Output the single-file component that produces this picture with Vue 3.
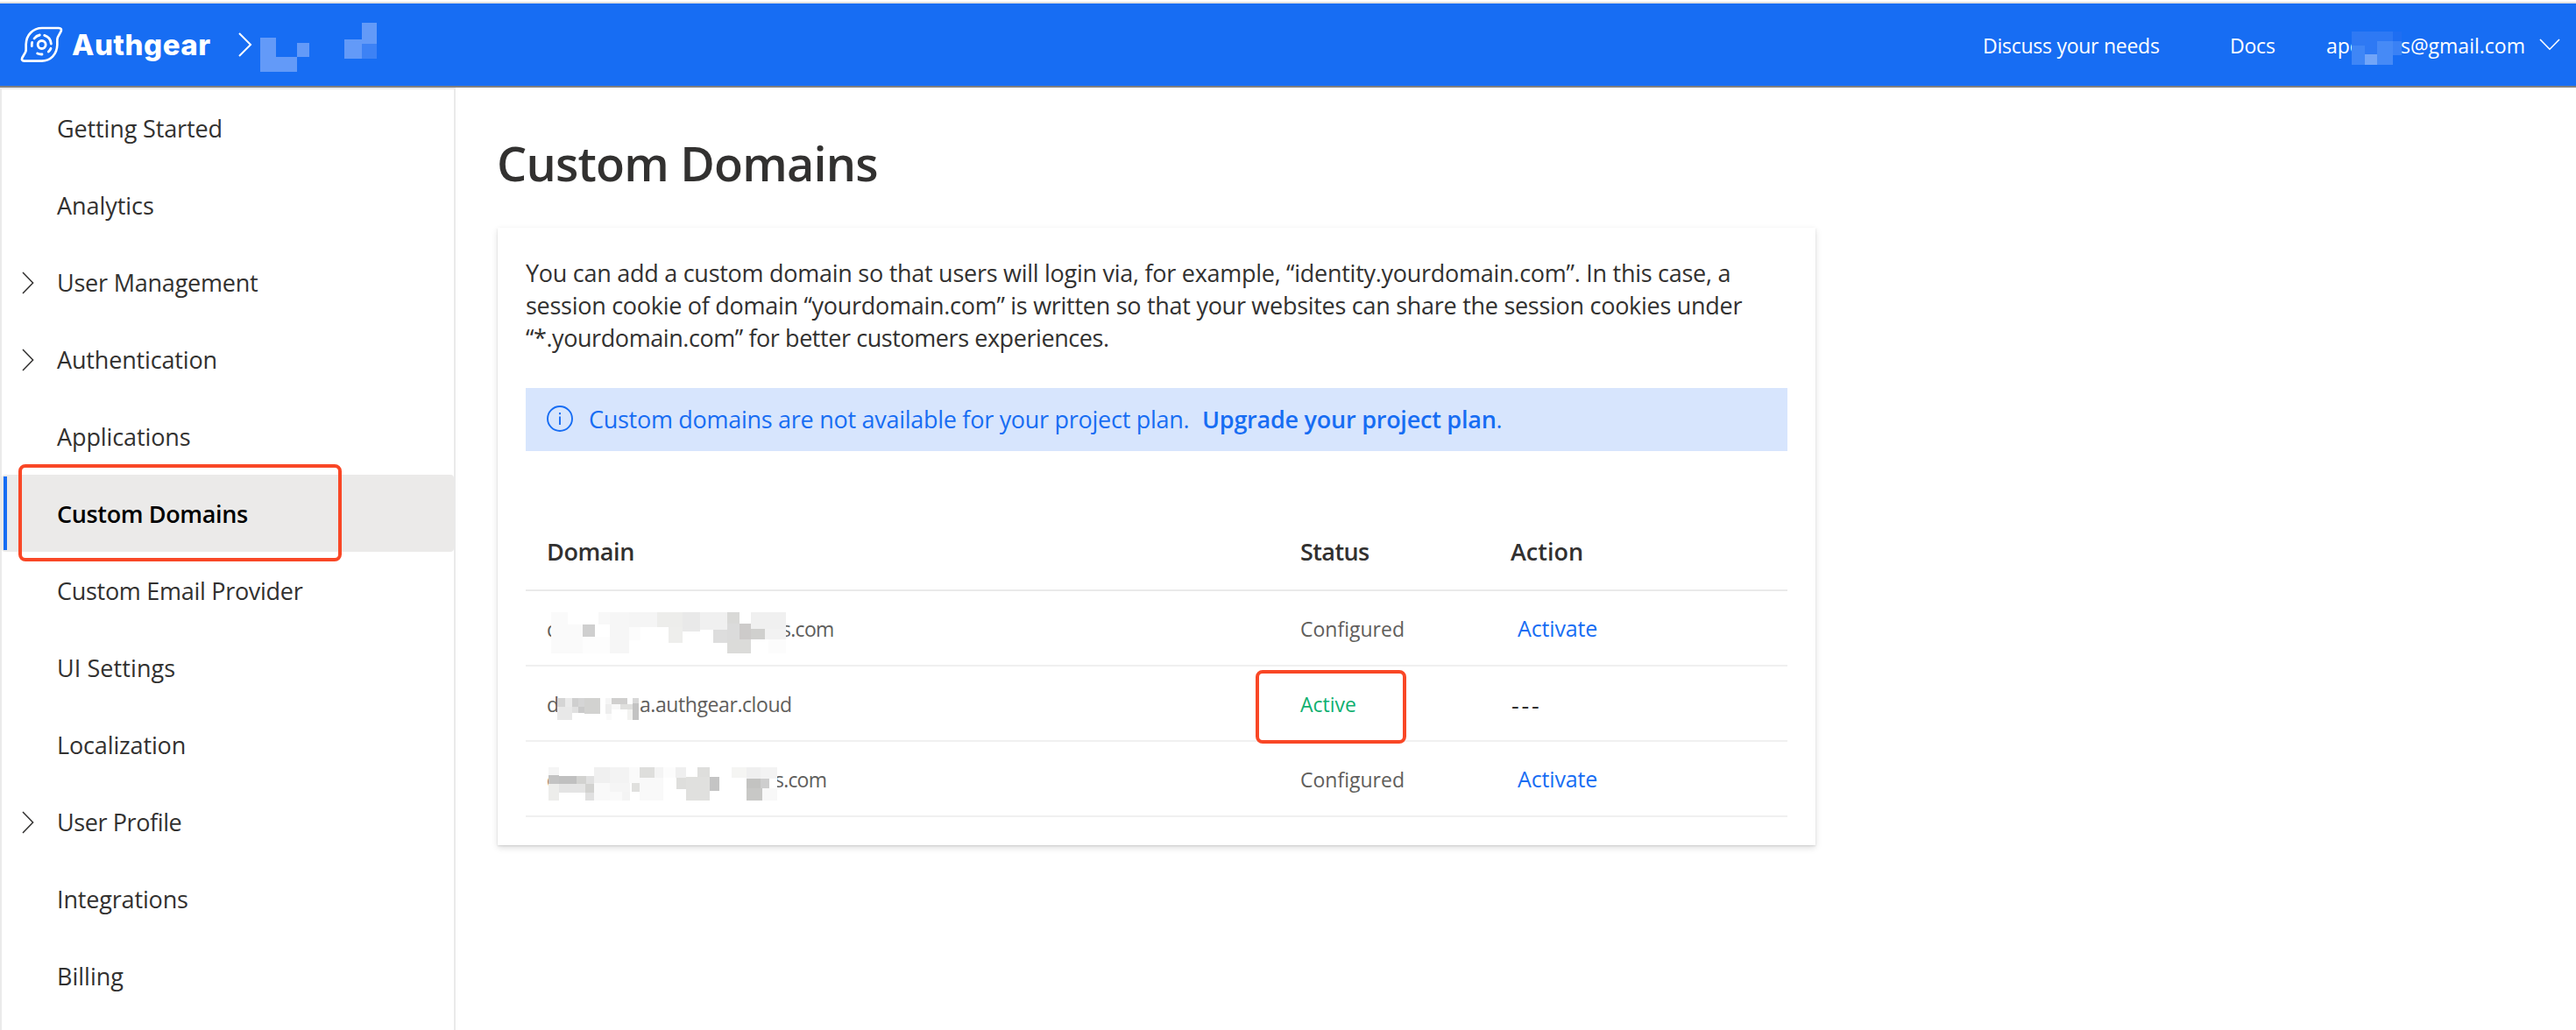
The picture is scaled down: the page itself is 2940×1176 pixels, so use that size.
<script setup>
const nav = [
  { label: 'Getting Started', ls: -0.13 },
  { label: 'Analytics', ls: -0.05 },
  { label: 'User Management', ls: -0.22, expandable: true },
  { label: 'Authentication', ls: -0.16, expandable: true },
  { label: 'Applications', ls: -0.1 },
  { label: 'Custom Domains', ls: -0.36, selected: true },
  { label: 'Custom Email Provider', ls: -0.29 },
  { label: 'UI Settings', ls: 0.08 },
  { label: 'Localization', ls: -0.14 },
  { label: 'User Profile', ls: -0.4, expandable: true },
  { label: 'Integrations', ls: -0.16 },
  { label: 'Billing', ls: 0 },
]

const description = [
  { text: 'You can add a custom domain so that users will login via, for example, “identity.yourdomain.com”. In this case, a', ls: -0.27 },
  { text: 'session cookie of domain “yourdomain.com” is written so that your websites can share the session cookies under', ls: -0.28 },
  { text: '“*.yourdomain.com” for better customers experiences.', ls: -0.43 },
]

// Mosaic tiles: [left, top, right, bottom, fill] in thirds of a pixel
const crumbTiles = [
  [891, 129, 945, 246, '#639af8'], [945, 195, 1017, 246, '#639af8'], [1017, 147, 1059, 195, '#639af8'],
  [1239, 78, 1290, 150, '#639af8'], [1179, 135, 1239, 201, '#639af8'], [1239, 150, 1290, 201, '#3d82f5'],
]
const emailTiles = [
  [132, 48, 303, 162, '#176df3'],
  [132, 48, 177, 96, '#2f79f3'], [177, 48, 273, 81, '#2e79f4'], [177, 81, 219, 126, '#2e79f4'],
  [132, 96, 177, 162, '#3f86f6'], [177, 126, 219, 162, '#72a5f8'], [219, 81, 273, 162, '#468af6'],
  [273, 48, 303, 81, '#1e6ef2'], [273, 81, 303, 129, '#3a81f5'],
]

const rows = [
  {
    prefix: 'd', prefixWidth: 268, suffix: 's.com', ls: -0.7, status: 'Configured', action: 'Activate',
    box: [87, 117, 891, 258], top: 24,
    tiles: [
      [87, 117, 891, 258, '#fff'],
      [87, 117, 144, 159, '#fafafa'], [87, 159, 195, 258, '#fafafa'], [195, 159, 237, 201, '#cfcfcf'],
      [195, 201, 288, 258, '#fdfdfd'], [249, 117, 288, 159, '#f8f8f8'], [288, 117, 354, 258, '#f6f6f6'],
      [354, 117, 450, 168, '#f5f5f5'], [354, 168, 393, 213, '#fcfcfc'], [450, 117, 537, 168, '#ededeb'],
      [489, 168, 537, 222, '#eeeeec'], [537, 117, 597, 183, '#e9e9e9'], [597, 117, 690, 177, '#f0f0f0'],
      [690, 117, 732, 156, '#d9d9d7'], [642, 177, 690, 222, '#dddddd'], [690, 156, 732, 210, '#dbdbdb'],
      [732, 156, 771, 210, '#cdcbca'], [771, 174, 819, 210, '#d0d0ce'], [690, 210, 771, 258, '#dbdbd9'],
      [771, 117, 891, 174, '#f0f0f0'], [819, 174, 891, 210, '#f2f2f2'], [831, 210, 891, 258, '#fcfcfc'],
    ],
  },
  {
    prefix: 'd', prefixWidth: 106, suffix: 'a.authgear.cloud', ls: -0.42, status: 'Active', action: '---',
    box: [108, 411, 387, 486], top: 36,
    tiles: [
      [108, 411, 135, 441, '#d5d5d5'], [135, 411, 159, 441, '#eaeaea'], [108, 441, 159, 486, '#e8e8e8'],
      [159, 411, 180, 441, '#cfcfcf'], [180, 411, 201, 441, '#d5d5d5'], [159, 441, 180, 462, '#e0e0e0'],
      [180, 441, 201, 462, '#cacaca'], [201, 411, 255, 465, '#d2d2d0'], [273, 411, 294, 432, '#f5f5f5'],
      [273, 432, 294, 465, '#eeeeee'], [276, 465, 294, 486, '#fafafa'], [294, 411, 348, 432, '#d0cfce'],
      [294, 432, 324, 450, '#f8f8f8'], [324, 432, 366, 450, '#e0e0de'], [366, 411, 387, 429, '#d8d8d8'],
      [366, 429, 387, 486, '#c3c3c3'], [348, 450, 366, 486, '#f2f2f0'],
    ],
  },
  {
    prefix: 'd', prefixWidth: 260, suffix: 's.com', ls: -0.8, status: 'Configured', action: 'Activate',
    box: [78, 648, 861, 762], top: 29,
    tiles: [
      [78, 648, 861, 762, '#fff'],
      [78, 648, 114, 675, '#f5f5f5'], [78, 675, 114, 705, '#c3c3c3'], [114, 678, 174, 705, '#c0c0c0'],
      [174, 678, 207, 705, '#d2d2d0'], [207, 678, 234, 705, '#e0e0e0'], [78, 705, 114, 762, '#ededeb'],
      [114, 705, 204, 735, '#e4e4e4'], [204, 705, 234, 735, '#d2d2d0'], [204, 735, 234, 762, '#e0e0e0'],
      [234, 648, 288, 702, '#f0f0f0'], [288, 648, 354, 702, '#f3f3f3'], [234, 702, 288, 762, '#f9f9f9'],
      [288, 702, 357, 732, '#f5f5f5'], [288, 732, 330, 762, '#fafafa'], [330, 732, 357, 762, '#f4f4f4'],
      [354, 648, 390, 702, '#fafafa'], [363, 702, 390, 732, '#e0e0de'], [390, 648, 441, 684, '#dededc'],
      [441, 648, 471, 684, '#f4f4f4'], [390, 684, 471, 762, '#f9f9f9'], [471, 648, 513, 684, '#fcfcfc'],
      [513, 648, 549, 684, '#efefef'], [516, 684, 549, 723, '#dededc'], [588, 648, 630, 681, '#dededc'],
      [549, 681, 630, 762, '#e0e0de'], [630, 681, 663, 729, '#c4c4c4'], [705, 648, 756, 684, '#f5f5f3'],
      [756, 648, 804, 687, '#efefef'], [804, 648, 861, 687, '#f3f3f3'], [756, 687, 804, 720, '#c3c3c1'],
      [804, 687, 834, 720, '#cecece'], [756, 720, 810, 762, '#c8c8c6'], [810, 720, 861, 762, '#f8f8f8'],
    ],
  },
]

const viewBox = ([l, t, r, b]) => `${l} ${t} ${r - l} ${b - t}`
const maskStyle = ({ box: [l, t, r, b], top }) => ({
  left: `${l / 3 - 24}px`,
  top: `${top}px`,
  width: `${(r - l) / 3}px`,
  height: `${(b - t) / 3}px`,
})
</script>

<template>
  <div class="page">
    <header class="topbar">
      <svg class="logo" viewBox="0 0 192 168" fill="none" stroke="#fff" stroke-linecap="round" stroke-linejoin="round">
        <path stroke-width="8" d="M96 24H153Q165 25 161 35L150 55Q147 61 148 70L148 82C147 115 124 137 95 137H35Q24 136 28 126L39 107Q42 101 41 92L41 80C42 47 65 24 96 24Z" />
        <circle cx="95" cy="81" r="13.5" stroke-width="8.5" />
        <path stroke-width="8.5" d="M104 49A33 33 0 0 1 127 78M126 94A33 33 0 0 1 118 105M96 114A33 33 0 0 1 80 111M61 86A33 33 0 0 1 62 73M69 60A33 33 0 0 1 88 48" />
      </svg>
      <span class="wordmark">Authgear</span>
      <svg class="crumb-chevron" viewBox="0 0 16 28" fill="none" stroke="#fff" stroke-width="2"><path d="M1 1L14 14L1 27" /></svg>
      <svg class="crumb-mask" viewBox="891 78 399 168" shape-rendering="crispEdges">
        <rect v-for="(t, i) in crumbTiles" :key="i" :x="t[0]" :y="t[1]" :width="t[2] - t[0]" :height="t[3] - t[1]" :fill="t[4]" />
      </svg>
      <a class="link discuss">Discuss your needs</a>
      <a class="link docs">Docs</a>
      <div class="account link">
        <span class="account-start">ape</span><span>s@gmail.com</span>
        <svg class="email-mask" viewBox="132 48 171 114" shape-rendering="crispEdges">
          <rect v-for="(t, i) in emailTiles" :key="i" :x="t[0]" :y="t[1]" :width="t[2] - t[0]" :height="t[3] - t[1]" :fill="t[4]" />
        </svg>
      </div>
      <svg class="account-chevron" viewBox="0 0 24 14" fill="none" stroke="#fff" stroke-width="1.6"><path d="M1 1L12 12.2L23 1" /></svg>
    </header>

    <div class="body">
      <nav class="sidebar">
        <div v-for="item in nav" :key="item.label" class="nav-item" :class="{ selected: item.selected }">
          <span class="nav-icon">
            <svg v-if="item.expandable" viewBox="0 0 14 26" fill="none" stroke="#323130" stroke-width="1.5"><path d="M1 1L12.6 13L1 25" /></svg>
          </span>
          <span class="nav-label" :style="{ letterSpacing: item.ls + 'px' }">{{ item.label }}</span>
          <i v-if="item.selected" class="annotation nav-annotation"></i>
        </div>
      </nav>

      <main class="content">
        <h1>Custom Domains</h1>
        <section class="card">
          <p class="description">
            <span v-for="line in description" :key="line.text" :style="{ letterSpacing: line.ls + 'px' }">{{ line.text }}</span>
          </p>
          <div class="message">
            <svg class="info" viewBox="0 0 32 32" fill="none" stroke="#176df3" stroke-width="1.9">
              <circle cx="16" cy="16" r="14" />
              <path d="M16 13.5V23M16 9V11.2" />
            </svg>
            <span class="message-text">Custom domains are not available for your project plan.</span>
            <b>Upgrade your project plan</b><span>.</span>
          </div>
          <div class="table">
            <div class="row head">
              <span class="th-domain">Domain</span><span class="th-status">Status</span><span>Action</span>
            </div>
            <div v-for="(row, r) in rows" :key="r" class="row">
              <div class="domain">
                <span :style="{ width: row.prefixWidth + 'px' }">{{ row.prefix }}</span>
                <span :style="{ letterSpacing: row.ls + 'px' }">{{ row.suffix }}</span>
                <svg class="mask" :viewBox="viewBox(row.box)" :style="maskStyle(row)" shape-rendering="crispEdges">
                  <rect v-for="(t, i) in row.tiles" :key="i" :x="t[0]" :y="t[1]" :width="t[2] - t[0]" :height="t[3] - t[1]" :fill="t[4]" />
                </svg>
              </div>
              <div class="status" :class="{ active: row.status === 'Active' }">
                {{ row.status }}
                <i v-if="row.status === 'Active'" class="annotation status-annotation"></i>
              </div>
              <div :class="row.action === '---' ? 'no-action' : 'action'">{{ row.action }}</div>
            </div>
          </div>
        </section>
      </main>
    </div>
  </div>
</template>

<style>
body {
  background: #fff;
  overflow: hidden;
}
</style>

<style scoped>
.page {
  width: 2940px;
  height: 1176px;
  overflow: hidden;
  display: flex;
  flex-direction: column;
  box-sizing: border-box;
  padding-top: 2px;
  background: #fff;
  color: #323130;
  font-family: "Open Sans", "Noto Sans", sans-serif;
  font-size: 27px;
  white-space: nowrap;
}
.page * {
  box-sizing: border-box;
}
svg {
  display: block;
  flex: none;
}
.topbar {
  flex: none;
  height: 98px;
  border-top: 2px solid #e1e1e1;
  border-bottom: 2px solid #808080;
  background: #176df3;
  color: #fff;
  display: flex;
  align-items: flex-start;
}
.logo {
  width: 64px;
  height: 56px;
  margin: 20px 0 0 16px;
}
.wordmark {
  width: 190px;
  margin-left: 2px;
  font: 800 33px/94px Inter, sans-serif;
  letter-spacing: 0.5px;
}
.crumb-chevron {
  width: 16px;
  height: 28px;
  margin-top: 33px;
}
.crumb-mask {
  width: 133px;
  height: 56px;
  margin: 22px 0 0 9px;
}
.link {
  font-size: 23px;
  line-height: 96px;
}
.discuss {
  margin-left: auto;
  width: 282px;
  letter-spacing: -0.26px;
}
.docs {
  width: 110px;
  letter-spacing: -0.2px;
}
.account {
  position: relative;
  display: flex;
  width: 243px;
}
.account-start {
  width: 85px;
}
.email-mask {
  position: absolute;
  left: 29px;
  top: 32px;
  width: 57px;
  height: 38px;
}
.account-chevron {
  width: 24px;
  height: 14px;
  margin: 40px 18px 0 0;
}
.body {
  flex: 1;
  display: flex;
  min-height: 0;
}
.sidebar {
  flex: none;
  width: 520px;
  border: 2px solid #eaeaea;
  border-bottom: 0;
}
.nav-item {
  position: relative;
  height: 88px;
  display: flex;
  align-items: center;
}
.nav-icon {
  width: 63px;
  padding: 1px 0 0 23px;
}
.nav-icon svg {
  width: 14px;
  height: 26px;
}
.nav-label {
  line-height: 88px;
  padding-top: 2px;
}
.selected {
  background: #ebeae9;
  border-radius: 4px;
  color: #000;
  font-weight: 600;
}
.selected::before {
  content: "";
  position: absolute;
  left: 2px;
  top: 2px;
  bottom: 2px;
  width: 4px;
  background: #176df3;
}
.annotation {
  position: absolute;
  border: 4px solid #f94726;
  border-radius: 8px;
}
.nav-annotation {
  left: 19px;
  top: -12px;
  width: 369px;
  height: 111px;
}
.content {
  padding: 46px 0 0 48px;
}
h1 {
  margin: 0 0 0 -1px;
  font-size: 54px;
  line-height: 80px;
  font-weight: 600;
  letter-spacing: -0.78px;
}
.card {
  width: 1504px;
  height: 705px;
  margin-top: 34px;
  padding: 33px 32px 0;
  box-shadow: 0 3.2px 7.2px rgba(0, 0, 0, 0.132), 0 0.6px 1.8px rgba(0, 0, 0, 0.108);
}
.description {
  margin: 0;
  display: flex;
  flex-direction: column;
  line-height: 37.2px;
}
.message {
  margin-top: 38px;
  height: 72px;
  padding-left: 23px;
  display: flex;
  align-items: center;
  background: #d7e5fd;
  color: #176df3;
  line-height: 74px;
}
.info {
  width: 32px;
  height: 32px;
  margin: -2px 17px 0 0;
}
.message-text {
  letter-spacing: -0.28px;
  width: 700px;
}
.message b {
  font-weight: 600;
  letter-spacing: -0.24px;
}
.table {
  margin-top: 72px;
}
.row {
  display: grid;
  grid-template-columns: 860px 240px 1fr;
  height: 86px;
  padding-left: 24px;
  line-height: 86px;
  border-bottom: 2px solid #f0f0f0;
}
.head {
  height: 88px;
  border-bottom-color: #eaeaea;
  font-weight: 600;
}
.th-domain {
  letter-spacing: -0.4px;
}
.th-status {
  letter-spacing: -0.6px;
}
.domain {
  position: relative;
  display: flex;
  font-size: 23px;
  color: #605e5c;
}
.domain span {
  flex: none;
}
.mask {
  position: absolute;
}
.status {
  position: relative;
  font-size: 23px;
  color: #605e5c;
}
.active {
  color: #10b070;
}
.status-annotation {
  left: -51px;
  top: 4px;
  width: 172px;
  height: 84px;
}
.action {
  padding-left: 8px;
  font-size: 25px;
  letter-spacing: -0.15px;
  line-height: 84px;
  color: #176df3;
}
.no-action {
  padding: 1px 0 0 1px;
  letter-spacing: 2.8px;
}
</style>
